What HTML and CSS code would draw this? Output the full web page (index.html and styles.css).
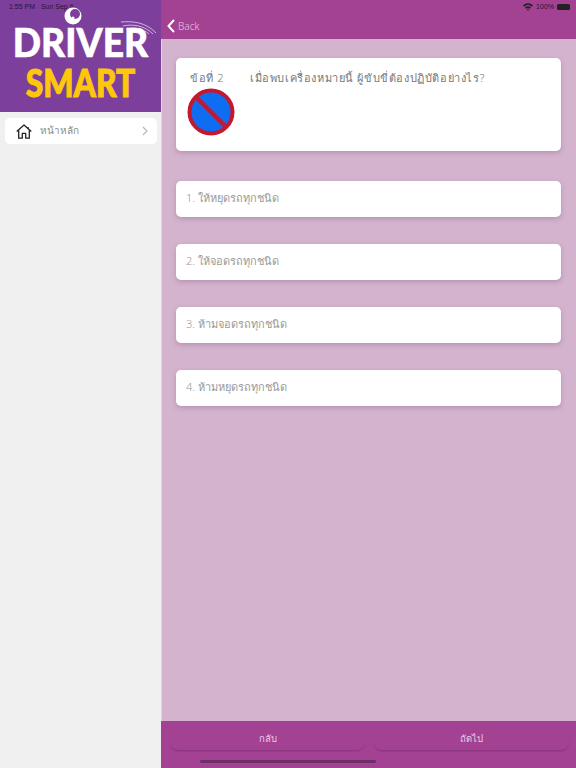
FILE: index.html
```html
<!DOCTYPE html>
<html lang="en">
<head>
    <meta charset="UTF-8">
    <meta name="viewport" content="width=device-width, initial-scale=1.0">
    <link rel="stylesheet" href="styles.css">
</head>
<body>
<div class="app">
    <aside class="sidebar">
        <div class="logo">
            <div class="status-time">1:55 PM&nbsp;&nbsp;&nbsp;Sun Sep 6</div>
            <!-- eye and signal marks sit over the wordmark -->
            <svg class="logo-eye" width="20" height="20" viewBox="0 0 20 20">
                <circle cx="10" cy="10" r="8.5" fill="#fff"/>
                <circle cx="12" cy="8" r="5" fill="#7d3f9c"/>
                <circle cx="10" cy="12" r="1.6" fill="#fff"/>
            </svg>
            <svg class="logo-signal" width="38" height="16" viewBox="0 0 38 16" fill="none" stroke="#e4d2ee" stroke-width="0.8">
                <path d="M1 2 C12 1 26 2 36 13"/>
                <path d="M3 6 C12 4 24 5 33 14"/>
                <path d="M6 9 C14 7 22 8 29 14"/>
            </svg>
            <div class="logo-driver">DRIVER</div>
            <div class="logo-smart">SMART</div>
        </div>
        <div class="menu-item">
            <svg class="home-icon" width="16" height="15" viewBox="0 0 16 15" fill="none" stroke="#222" stroke-width="1.3" stroke-linejoin="round">
                <path d="M0.7 7.6 L8 1 L15.3 7.6"/>
                <path d="M2.7 6.2 V14.2 H6.3 V9.4 H9.7 V14.2 H13.3 V6.2"/>
                <path d="M12 3 V4.8"/>
            </svg>
            <span class="menu-label">หน้าหลัก</span>
            <svg class="menu-arrow" width="6" height="10" viewBox="0 0 6 10" fill="none" stroke="#b5b5b5" stroke-width="1.1">
                <path d="M1 1 L5 5 L1 9"/>
            </svg>
        </div>
    </aside>

    <main class="main">
        <header class="topbar">
            <div class="status-right">
                <svg width="10" height="8" viewBox="0 0 10 8">
                    <path d="M0 2.6 C3 -0.6 7 -0.6 10 2.6 L8.8 3.8 C6.4 1.4 3.6 1.4 1.2 3.8 Z M2 4.6 C3.9 2.8 6.1 2.8 8 4.6 L6.9 5.7 C5.6 4.6 4.4 4.6 3.1 5.7 Z M3.9 6.5 C4.6 5.9 5.4 5.9 6.1 6.5 L5 7.8 Z" fill="#222"/>
                </svg>
                <span>100%</span>
                <span class="battery"></span>
            </div>
            <div class="back">
                <svg width="8" height="14" viewBox="0 0 8 14" fill="none" stroke="#fff" stroke-width="2">
                    <path d="M7 1 L1.5 7 L7 13"/>
                </svg>
                <span>Back</span>
            </div>
        </header>

        <div class="content">
            <div class="card question">
                <div class="question-text">
                    <span class="question-no">ข้อที่ 2</span>
                    <span>เมื่อพบเครื่องหมายนี้ ผู้ขับขี่ต้องปฏิบัติอย่างไร?</span>
                </div>
                <svg class="sign" width="48" height="48" viewBox="0 0 48 48">
                    <circle cx="24" cy="24" r="21.5" fill="#0f6df2" stroke="#c4182f" stroke-width="4"/>
                    <path d="M8.5 8.5 L39.5 39.5" stroke="#c4182f" stroke-width="4.5"/>
                </svg>
            </div>
            <div class="options">
                <div class="card option">1. ให้หยุดรถทุกชนิด</div>
                <div class="card option">2. ให้จอดรถทุกชนิด</div>
                <div class="card option">3. ห้ามจอดรถทุกชนิด</div>
                <div class="card option">4. ห้ามหยุดรถทุกชนิด</div>
            </div>
        </div>

        <footer class="footer">
            <div class="foot-btn">กลับ</div>
            <div class="foot-btn">ถัดไป</div>
            <div class="home-bar"></div>
        </footer>
    </main>
</div>
</body>
</html>
```

FILE: styles.css
```css
* {
    box-sizing: border-box;
}

html, body {
    margin: 0;
    height: 100%;
}

body {
    font-family: "Noto Sans", "Open Sans", "DejaVu Sans", sans-serif;
    font-weight: 300;
}

.app {
    display: flex;
    width: 576px;
    height: 768px;
    overflow: hidden;
}

/* left column */
.sidebar {
    width: 161px;
    flex-shrink: 0;
    background: #f0f0f0;
}

.logo {
    position: relative;
    height: 112px;
    padding-top: 23px;
    background: #7d3f9c;
    text-align: center;
}

.status-time {
    position: absolute;
    top: 3px;
    left: 9px;
    font-family: "Liberation Sans", sans-serif;
    font-weight: 400;
    font-size: 7px;
    line-height: 8px;
    color: #2a1533;
}

.logo-eye {
    position: absolute;
    top: 6px;
    left: 63px;
}

.logo-signal {
    position: absolute;
    top: 20px;
    left: 120px;
}

.logo-driver {
    font-family: "Lato", sans-serif;
    font-weight: 900;
    font-size: 40px;
    line-height: 38px;
    color: #fff;
    -webkit-text-stroke: 0.6px #fff;
    transform: scaleX(0.93);
}

.logo-smart {
    margin-top: 6px;
    font-family: "Lato", sans-serif;
    font-weight: 900;
    font-size: 37px;
    line-height: 32px;
    color: #fdc70c;
    -webkit-text-stroke: 1px #fdc70c;
    transform: scaleX(0.86);
}

.menu-item {
    display: flex;
    align-items: center;
    height: 26px;
    margin: 6px 4px 0 5px;
    padding: 0 9px 0 11px;
    background: #fff;
    border-radius: 5px;
}

.menu-label {
    flex: 1;
    margin-left: 8px;
    margin-bottom: 2px;
    font-size: 10px;
    color: #8a8a8a;
}

/* right column */
.main {
    flex: 1;
    display: flex;
    flex-direction: column;
    background: #d4b3cf;
    border-left: 1px solid #e3d3e1;
}

.topbar {
    position: relative;
    display: flex;
    align-items: flex-end;
    height: 39px;
    margin-left: -1px;
    padding: 0 0 6px 6px;
    background: #a34192;
}

.status-right {
    position: absolute;
    top: 3px;
    right: 6px;
    display: flex;
    align-items: center;
    gap: 3px;
    font-family: "Liberation Sans", sans-serif;
    font-weight: 400;
    font-size: 7px;
    line-height: 8px;
    color: #2a1533;
}

.battery {
    width: 13px;
    height: 6px;
    background: #222;
    border-radius: 1.5px;
}

.back {
    display: flex;
    align-items: center;
    gap: 3px;
    font-size: 10px;
    line-height: 14px;
    color: #e6c9df;
}

.content {
    flex: 1;
    padding: 19px 15px 0 14px;
}

.card {
    background: #fff;
    border-radius: 5px;
    box-shadow: 0 2px 5px rgba(90, 50, 90, 0.25);
}

.question {
    height: 93px;
    padding: 10px 12px 0 12px;
}

.question-text {
    display: flex;
    gap: 28px;
    padding-left: 2px;
    font-size: 11px;
    line-height: 20px;
    letter-spacing: 0.6px;
    color: #777;
}

.question-no {
    width: 32px;
    white-space: nowrap;
}

.sign {
    display: block;
    margin: 0 0 0 -1px;
}

.options {
    display: flex;
    flex-direction: column;
    gap: 27px;
    margin-top: 30px;
}

.option {
    display: flex;
    align-items: center;
    height: 36px;
    padding: 0 0 2px 10px;
    font-size: 11px;
    color: #999;
}

.footer {
    position: relative;
    display: flex;
    gap: 9px;
    height: 47px;
    margin-left: -1px;
    padding: 1px 7px 0 9px;
    background: #a34192;
}

.foot-btn {
    flex: 1;
    height: 28px;
    border-radius: 8px;
    font-size: 9.5px;
    line-height: 33px;
    text-align: center;
    color: #f0cbe8;
    box-shadow: 0 2px 2px -1px rgba(70, 20, 70, 0.3);
}

.home-bar {
    position: absolute;
    left: 39px;
    bottom: 5px;
    width: 176px;
    height: 3px;
    background: #6c2f68;
    border-radius: 2px;
}
```
